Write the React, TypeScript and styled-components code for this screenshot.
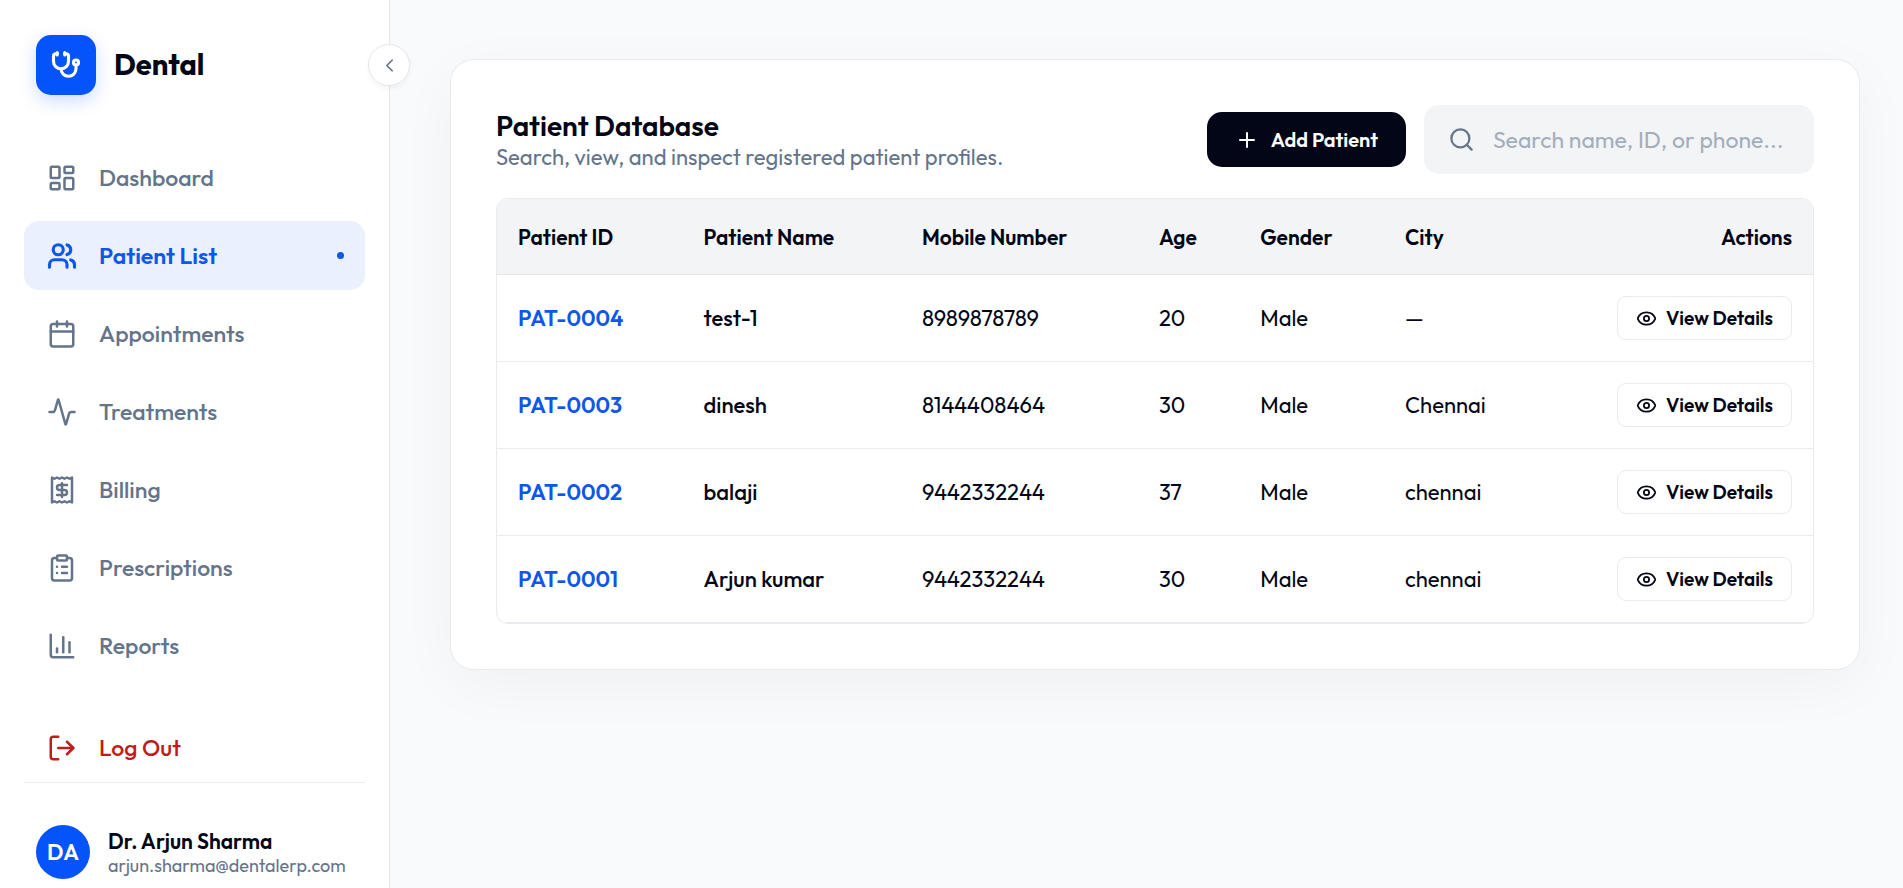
import React from "react";
import styled, { createGlobalStyle, css } from "styled-components";
import {
  Activity,
  Calendar,
  ChartColumn,
  ChevronLeft,
  ClipboardList,
  Eye,
  LayoutDashboard,
  LogOut,
  Plus,
  Receipt,
  Search,
  Stethoscope,
  Users,
  type LucideIcon,
} from "lucide-react";

const GlobalStyle = createGlobalStyle`
  *, *::before, *::after { box-sizing: border-box; }
  body {
    margin: 0;
    background: #f8fafc;
    color: #020617;
    font-family: Outfit, Lato, sans-serif;
    font-size: 22px;
    line-height: 28px;
  }
  button, input { font: inherit; color: inherit; }
  a { color: inherit; text-decoration: none; }
`;

const Layout = styled.div`
  display: flex;
  min-height: 100vh;
`;

const Sidebar = styled.aside`
  position: relative;
  flex: 0 0 390px;
  display: flex;
  flex-direction: column;
  padding: 35px 24px 9px;
  background: #fff;
  border-right: 1px solid #e5e7eb;
`;

const CollapseButton = styled.button`
  position: absolute;
  top: 44px;
  right: -21px;
  width: 42px;
  height: 42px;
  display: flex;
  align-items: center;
  justify-content: center;
  padding: 0;
  color: #64748b;
  background: #fff;
  border: 1px solid #e5e7eb;
  border-radius: 50%;
  box-shadow: 0 3px 6px rgba(0, 0, 0, 0.04);
  cursor: pointer;
`;

const Brand = styled.div`
  display: flex;
  align-items: center;
  gap: 18px;
  padding: 0 12px;
  margin-bottom: 48px;
`;

const BrandMark = styled.div`
  width: 60px;
  height: 60px;
  display: flex;
  align-items: center;
  justify-content: center;
  color: #fff;
  background: #0553fb;
  border-radius: 15px;
  box-shadow: 0 6px 18px rgba(5, 83, 251, 0.2);
`;

const BrandName = styled.span`
  font-size: 29px;
  font-weight: 700;
`;

const Nav = styled.nav`
  display: flex;
  flex-direction: column;
  gap: 9px;
  margin-bottom: 33px;
`;

const itemLayout = css`
  display: flex;
  align-items: center;
  gap: 22px;
  width: 100%;
  height: 69px;
  padding: 0 21px 0 23px;
  border: 0;
  border-radius: 15px;
  font-size: 23px;
  cursor: pointer;
`;

const NavItem = styled.a<{ $active: boolean }>`
  ${itemLayout}
  color: ${(p) => (p.$active ? "#0f56ea" : "#64748b")};
  background: ${(p) => (p.$active ? "#eaf0fd" : "transparent")};
  font-weight: ${(p) => (p.$active ? 600 : 500)};
`;

const ActiveDot = styled.span`
  width: 7px;
  height: 7px;
  margin-left: auto;
  border-radius: 50%;
  background: currentColor;
`;

const LogOutButton = styled.button`
  ${itemLayout}
  color: #c01c1c;
  background: transparent;
  font-weight: 500;
`;

const Profile = styled.div`
  display: flex;
  align-items: center;
  gap: 18px;
  padding: 42px 12px 0;
  border-top: 1px solid #e9ebee;
`;

const Avatar = styled.div`
  flex: 0 0 54px;
  height: 54px;
  display: flex;
  align-items: center;
  justify-content: center;
  color: #fff;
  background: #0553fb;
  border-radius: 50%;
  font-weight: 600;
`;

const ProfileText = styled.div`
  display: flex;
  flex-direction: column;
`;

const ProfileName = styled.span`
  font-size: 21px;
  font-weight: 600;
  line-height: 26px;
`;

const ProfileEmail = styled.span`
  color: #64748b;
  font-size: 18px;
  line-height: 23px;
`;

const Main = styled.main`
  flex: 1;
  min-width: 0;
  padding: 59px 43px 59px 60px;
`;

const Card = styled.section`
  padding: 45px;
  background: #fff;
  border: 1px solid #e9ebee;
  border-radius: 24px;
  box-shadow: 0 15px 60px rgba(0, 0, 0, 0.04);
`;

const CardHeader = styled.header`
  display: flex;
  align-items: center;
  justify-content: space-between;
  gap: 24px;
  margin-bottom: 24px;
`;

const Title = styled.h1`
  margin: 0;
  font-size: 28px;
  font-weight: 600;
  line-height: 35px;
`;

const Subtitle = styled.p`
  margin: 0;
  color: #64748b;
`;

const Actions = styled.div`
  display: flex;
  align-items: center;
  gap: 18px;
`;

const AddButton = styled.button`
  display: flex;
  align-items: center;
  gap: 12px;
  height: 55px;
  padding: 0 28px;
  color: #fff;
  background: #020617;
  border: 0;
  border-radius: 15px;
  font-size: 20px;
  font-weight: 600;
  cursor: pointer;
`;

const SearchBox = styled.label`
  display: flex;
  align-items: center;
  gap: 18px;
  width: 390px;
  height: 69px;
  padding: 0 24px;
  color: #64748b;
  background: #f3f4f6;
  border-radius: 15px;
`;

const SearchInput = styled.input`
  flex: 1;
  min-width: 0;
  padding: 0;
  color: #020617;
  background: transparent;
  border: 0;
  outline: 0;
  font-size: 23px;
  &::placeholder { color: #a3aebd; opacity: 1; }
`;

const TableFrame = styled.div`
  overflow: hidden;
  border: 1px solid #e9ebee;
  border-radius: 12px;
`;

const Table = styled.table`
  width: 100%;
  table-layout: fixed;
  border-collapse: separate;
  border-spacing: 0;
`;

const Column = styled.col<{ $share: number }>`
  width: ${(p) => p.$share}%;
`;

const HeadCell = styled.th<{ $end?: boolean }>`
  height: 76px;
  padding: 0 21px;
  background: #f3f4f6;
  border-bottom: 1px solid #e5e7eb;
  font-size: 21px;
  font-weight: 600;
  text-align: ${(p) => (p.$end ? "right" : "left")};
`;

const Cell = styled.td<{ $tone?: "id" | "name" }>`
  height: 87px;
  padding: 0 21px;
  border-bottom: 1px solid #e9ebee;
  color: ${(p) => (p.$tone === "id" ? "#0f56ea" : "inherit")};
  font-weight: ${(p) => (p.$tone === "id" ? 600 : p.$tone === "name" ? 500 : 400)};
`;

const ViewButton = styled.button`
  display: flex;
  align-items: center;
  gap: 9px;
  height: 44px;
  margin-left: auto;
  padding: 0 18px;
  background: #fff;
  border: 1px solid #e9ebee;
  border-radius: 9px;
  font-size: 19px;
  font-weight: 600;
  white-space: nowrap;
  cursor: pointer;
`;

const navItems: { label: string; icon: LucideIcon }[] = [
  { label: "Dashboard", icon: LayoutDashboard },
  { label: "Patient List", icon: Users },
  { label: "Appointments", icon: Calendar },
  { label: "Treatments", icon: Activity },
  { label: "Billing", icon: Receipt },
  { label: "Prescriptions", icon: ClipboardList },
  { label: "Reports", icon: ChartColumn },
];

const columns = [
  { label: "Patient ID", share: 14.1 },
  { label: "Patient Name", share: 16.6 },
  { label: "Mobile Number", share: 18 },
  { label: "Age", share: 7.7 },
  { label: "Gender", share: 11 },
  { label: "City", share: 11 },
  { label: "Actions", share: 21.6 },
];

const patients = [
  { id: "PAT-0004", name: "test-1", mobile: "8989878789", age: 20, gender: "Male", city: "—" },
  { id: "PAT-0003", name: "dinesh", mobile: "8144408464", age: 30, gender: "Male", city: "Chennai" },
  { id: "PAT-0002", name: "balaji", mobile: "9442332244", age: 37, gender: "Male", city: "chennai" },
  { id: "PAT-0001", name: "Arjun kumar", mobile: "9442332244", age: 30, gender: "Male", city: "chennai" },
];

export default function App() {
  const current = "Patient List";
  return (
    <>
      <GlobalStyle />
      <Layout>
        <Sidebar>
          <CollapseButton type="button" aria-label="Collapse sidebar">
            <ChevronLeft size={21} />
          </CollapseButton>
          <Brand>
            <BrandMark>
              <Stethoscope size={30} strokeWidth={2.5} />
            </BrandMark>
            <BrandName>Dental</BrandName>
          </Brand>
          <Nav aria-label="Main">
            {navItems.map(({ label, icon: Icon }) => {
              const active = label === current;
              return (
                <NavItem key={label} href="#" $active={active} aria-current={active ? "page" : undefined}>
                  <Icon size={30} strokeWidth={active ? 2.5 : 2} />
                  {label}
                  {active && <ActiveDot />}
                </NavItem>
              );
            })}
          </Nav>
          <LogOutButton type="button">
            <LogOut size={30} strokeWidth={2} />
            Log Out
          </LogOutButton>
          <Profile>
            <Avatar>DA</Avatar>
            <ProfileText>
              <ProfileName>Dr. Arjun Sharma</ProfileName>
              <ProfileEmail>arjun.sharma@dentalerp.com</ProfileEmail>
            </ProfileText>
          </Profile>
        </Sidebar>
        <Main>
          <Card>
            <CardHeader>
              <div>
                <Title>Patient Database</Title>
                <Subtitle>Search, view, and inspect registered patient profiles.</Subtitle>
              </div>
              <Actions>
                <AddButton type="button">
                  <Plus size={24} />
                  Add Patient
                </AddButton>
                <SearchBox>
                  <Search size={27} />
                  <SearchInput
                    type="text"
                    aria-label="Search patients"
                    placeholder="Search name, ID, or phone..."
                  />
                </SearchBox>
              </Actions>
            </CardHeader>
            <TableFrame>
              <Table>
                <colgroup>
                  {columns.map((c) => (
                    <Column key={c.label} $share={c.share} />
                  ))}
                </colgroup>
                <thead>
                  <tr>
                    {columns.map((c) => (
                      <HeadCell key={c.label} scope="col" $end={c.label === "Actions"}>
                        {c.label}
                      </HeadCell>
                    ))}
                  </tr>
                </thead>
                <tbody>
                  {patients.map((p) => (
                    <tr key={p.id}>
                      <Cell $tone="id">{p.id}</Cell>
                      <Cell $tone="name">{p.name}</Cell>
                      <Cell>{p.mobile}</Cell>
                      <Cell>{p.age}</Cell>
                      <Cell>{p.gender}</Cell>
                      <Cell>{p.city}</Cell>
                      <Cell>
                        <ViewButton type="button">
                          <Eye size={21} />
                          View Details
                        </ViewButton>
                      </Cell>
                    </tr>
                  ))}
                </tbody>
              </Table>
            </TableFrame>
          </Card>
        </Main>
      </Layout>
    </>
  );
}
